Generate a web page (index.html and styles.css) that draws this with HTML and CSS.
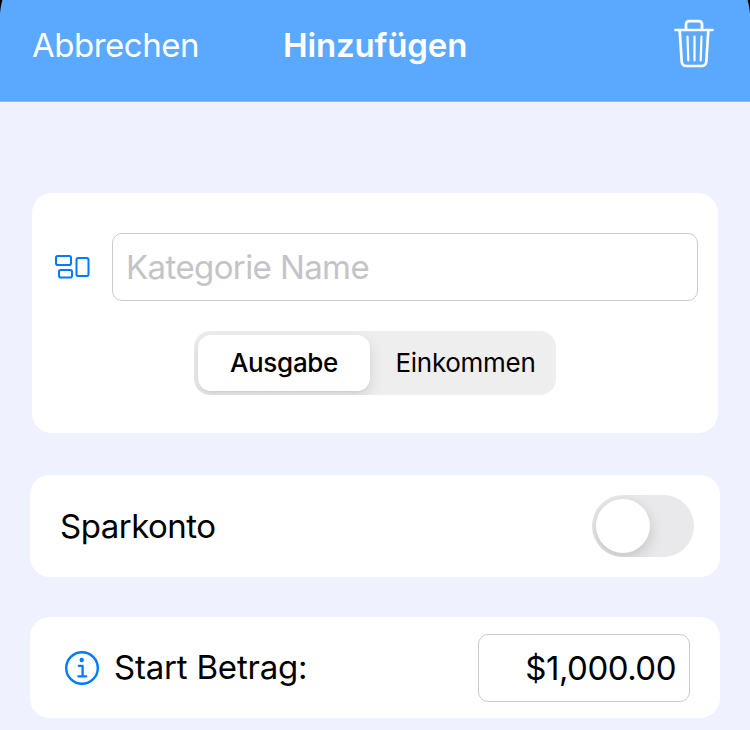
FILE: index.html
```html
<!DOCTYPE html>
<html lang="de">
<head>
<meta charset="utf-8">
<title>Hinzufügen</title>
<link rel="stylesheet" href="styles.css">
</head>
<body>
<header class="navbar">
  <svg class="corner corner-left" viewBox="0 0 4 16"><path d="M0 0H2.4C1.4 4 .4 8 0 14Z"/></svg>
  <svg class="corner corner-right" viewBox="0 0 4 16"><path d="M4 0H1.6C2.6 4 3.6 8 4 14Z"/></svg>
  <span class="cancel">Abbrechen</span>
  <h1 class="title">Hinzufügen</h1>
  <svg class="trash" viewBox="0 0 42 50" fill="none" stroke="#fff" stroke-linecap="round" stroke-linejoin="round">
    <path stroke-width="2.7" d="M2.4 11H39.6M13 10.5V5.5Q13 2.200 16.300 2.200H25.700Q29 2.200 29 5.500V10.500M6.700 11.500L8.700 42.500Q9 47 13.500 47H28.500Q33 47 33.300 42.500L35.300 11.500"/>
    <path stroke-width="2.2" d="M14.500 17.500L15.300 41.500M21.500 17.500V41.500M28.500 17.500L27.700 41.500"/>
  </svg>
</header>
<main class="content">
  <section class="card category">
    <div class="name-row">
      <svg class="group-icon" viewBox="0 0 36 24" fill="none" stroke="#007aff" stroke-width="2">
        <rect x="1" y="1" width="15" height="9" rx="1.800"/>
        <rect x="4" y="15" width="13" height="7.500" rx="1.800"/>
        <rect x="21.500" y="3" width="12" height="18" rx="1.800"/>
      </svg>
      <div class="field name-field"><span class="placeholder">Kategorie Name</span></div>
    </div>
    <div class="segments">
      <div class="segment selected"><span class="expense">Ausgabe</span></div>
      <div class="segment"><span class="income">Einkommen</span></div>
    </div>
  </section>
  <section class="card row savings">
    <span class="savings-label">Sparkonto</span>
    <div class="switch"><div class="knob"></div></div>
  </section>
  <section class="card row start">
    <svg class="info" viewBox="0 0 34 34" fill="none" stroke="#007aff">
      <circle cx="17" cy="17" r="15.800" stroke-width="2.400"/>
      <circle cx="16.700" cy="9" r="2.200" fill="#007aff" stroke="none"/>
      <path d="M13.800 14.900H17.600V25M13.300 25.300H21.200" stroke-width="2.300" stroke-linecap="round" stroke-linejoin="round"/>
    </svg>
    <span class="start-label">Start Betrag:</span>
    <div class="field amount"><span class="amount-text">$1,000.00</span></div>
  </section>
</main>
</body>
</html>
```
FILE: styles.css
```css
* { box-sizing: border-box; }
body {
  margin: 0;
  height: 730px;
  overflow: hidden;
  background: #eff1ff;
  color: #000;
  font-family: Inter, "Liberation Sans", sans-serif;
  font-size: 33px;
  line-height: 40px;
  white-space: nowrap;
}
.navbar {
  position: relative;
  display: grid;
  grid-template-columns: 251px 1fr 42px;
  height: 102px;
  padding: 0 35px 0 32px;
  background: #5ba8ff;
  border-bottom: 1px solid #a3b4d2;
  color: #fff;
}
.corner { position: absolute; top: 0; width: 4px; height: 16px; }
.corner-left { left: 0; }
.corner-right { right: 0; }
.cancel { margin-top: 25px; letter-spacing: -.5px; }
.title { margin: 25px 0 0; font-size: 33px; font-weight: 600; letter-spacing: -.15px; }
.trash { width: 42px; height: 50px; margin-top: 19px; }
.content { padding: 91px 30px 0; }
.card { background: #fff; border-radius: 20px; }
.category { height: 240px; margin: 0 2px 42px; padding: 40px 20px 0 23px; }
.name-row { display: flex; align-items: center; }
.group-icon { width: 36px; height: 24px; margin-right: 21px; }
.field {
  display: flex;
  align-items: center;
  height: 68px;
  border: 1px solid #cbcbcc;
  border-radius: 10px;
}
.name-field { flex: 1; padding-left: 13px; }
.placeholder { color: #c4c4c6; letter-spacing: -.6px; }
.segments {
  display: flex;
  width: 362px;
  height: 64px;
  margin: 30px 0 0 139px;
  padding: 4px;
  border-radius: 16px;
  background: #eee;
  font-size: 26px;
}
.segment { display: flex; flex: 1; align-items: center; justify-content: center; }
.segment.selected {
  flex: 0 0 172px;
  border-radius: 13px;
  background: #fff;
  box-shadow: 0 5px 14px rgba(0, 0, 0, .12), 0 1px 2px rgba(0, 0, 0, .04);
  clip-path: inset(-4px -20px -4px -4px round 16px);
  font-weight: 550;
}
.expense { letter-spacing: -.3px; }
.income { margin-left: 9px; letter-spacing: -.3px; }
.row { display: flex; align-items: center; }
.savings { height: 102px; margin-bottom: 40px; padding: 0 26px 0 30px; }
.savings-label { letter-spacing: -.5px; }
.switch {
  width: 102px;
  height: 62px;
  margin-left: auto;
  padding: 4px;
  overflow: hidden;
  border-radius: 31px;
  background: #e9e9eb;
}
.knob {
  width: 54px;
  height: 54px;
  border-radius: 50%;
  background: #fff;
  box-shadow: 0 5px 14px rgba(0, 0, 0, .17);
}
.start { height: 101px; padding: 0 30px 0 35px; }
.info { width: 34px; height: 34px; margin-right: 15px; }
.start-label { margin-top: -2px; letter-spacing: -.2px; }
.amount { width: 212px; margin-left: auto; padding-right: 13px; justify-content: flex-end; }
.amount-text { letter-spacing: -.5px; }
```
